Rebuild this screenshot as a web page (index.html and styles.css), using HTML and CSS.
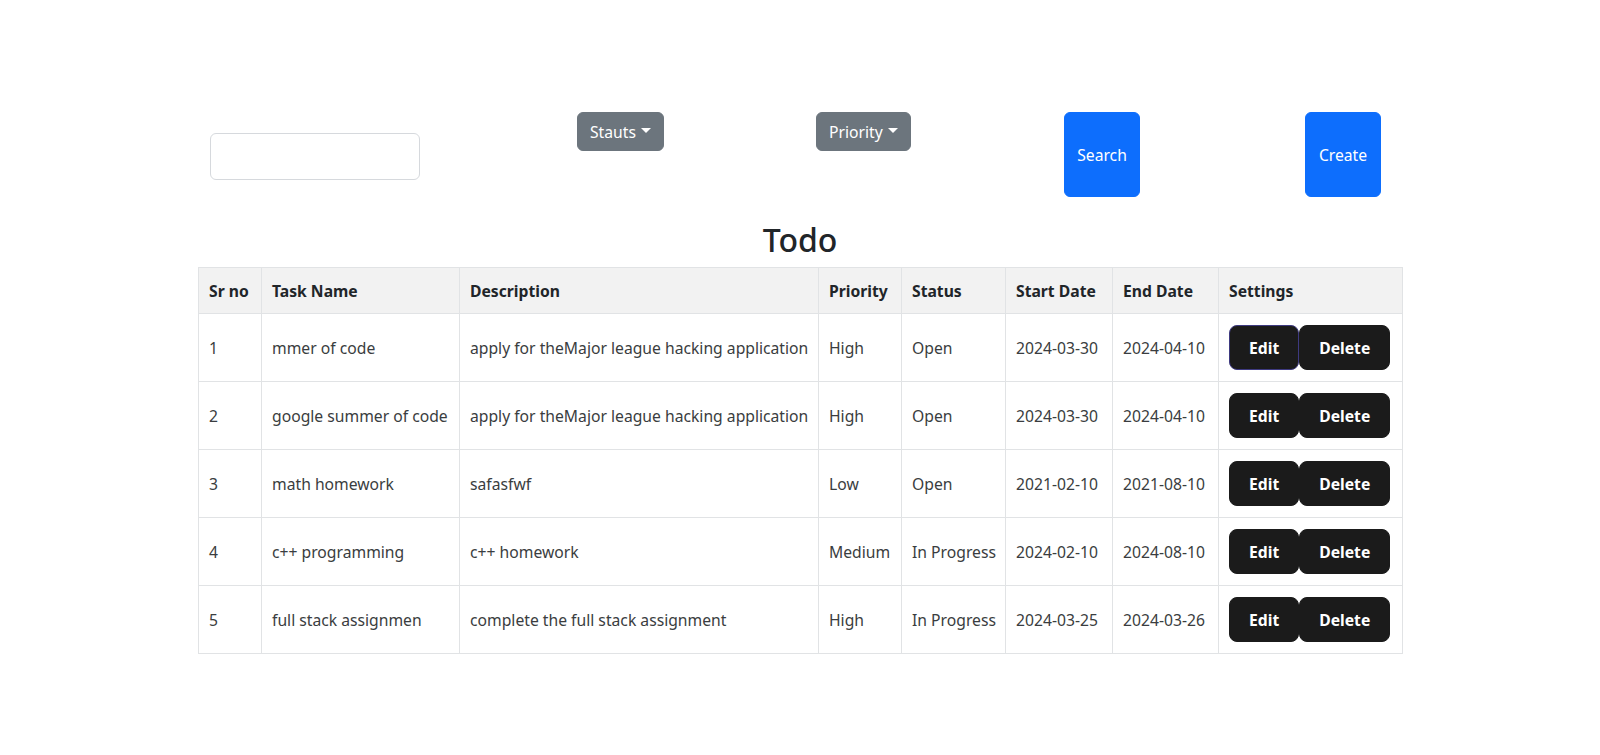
FILE: index.html
```html
<!DOCTYPE html>
<html lang="en">
<head>
<meta charset="utf-8">
<title>Todo</title>
<link rel="stylesheet" href="styles.css">
</head>
<body>
<main class="page">
  <div class="controls">
    <div class="ctl ctl-input"><input class="search-input" type="text"></div>
    <div class="ctl"><button class="btn btn-secondary">Stauts<span class="caret"></span></button></div>
    <div class="ctl"><button class="btn btn-secondary">Priority<span class="caret"></span></button></div>
    <div class="ctl"><button class="btn btn-primary btn-tall">Search</button></div>
    <div class="ctl"><button class="btn btn-primary btn-tall">Create</button></div>
  </div>

  <h2 class="title">Todo</h2>

  <table class="todo-table">
    <colgroup>
      <col class="c-sr"><col class="c-name"><col class="c-desc"><col class="c-pri">
      <col class="c-status"><col class="c-start"><col class="c-end"><col class="c-set">
    </colgroup>
    <thead>
      <tr>
        <th>Sr no</th><th>Task Name</th><th>Description</th><th>Priority</th>
        <th>Status</th><th>Start Date</th><th>End Date</th><th>Settings</th>
      </tr>
    </thead>
    <tbody>
      <tr>
        <td>1</td><td>mmer of code</td><td>apply for theMajor league hacking application</td><td>High</td>
        <td>Open</td><td>2024-03-30</td><td>2024-04-10</td>
        <td><div class="actions"><button class="btn btn-dark focused">Edit</button><button class="btn btn-dark">Delete</button></div></td>
      </tr>
      <tr>
        <td>2</td><td>google summer of code</td><td>apply for theMajor league hacking application</td><td>High</td>
        <td>Open</td><td>2024-03-30</td><td>2024-04-10</td>
        <td><div class="actions"><button class="btn btn-dark">Edit</button><button class="btn btn-dark">Delete</button></div></td>
      </tr>
      <tr>
        <td>3</td><td>math homework</td><td>safasfwf</td><td>Low</td>
        <td>Open</td><td>2021-02-10</td><td>2021-08-10</td>
        <td><div class="actions"><button class="btn btn-dark">Edit</button><button class="btn btn-dark">Delete</button></div></td>
      </tr>
      <tr>
        <td>4</td><td>c++ programming</td><td>c++ homework</td><td>Medium</td>
        <td>In Progress</td><td>2024-02-10</td><td>2024-08-10</td>
        <td><div class="actions"><button class="btn btn-dark">Edit</button><button class="btn btn-dark">Delete</button></div></td>
      </tr>
      <tr>
        <td>5</td><td>full stack assignmen</td><td>complete the full stack assignment</td><td>High</td>
        <td>In Progress</td><td>2024-03-25</td><td>2024-03-26</td>
        <td><div class="actions"><button class="btn btn-dark">Edit</button><button class="btn btn-dark">Delete</button></div></td>
      </tr>
    </tbody>
  </table>
</main>
</body>
</html>
```

FILE: styles.css
```css
* { box-sizing: border-box; }

html, body {
  margin: 0;
  background: #fff;
}

body {
  font-family: "Noto Sans", "Open Sans", sans-serif;
  font-size: 15.7px;
  line-height: 24px;
  color: #212529;
}

.page {
  width: 1204px;
  margin: 0 auto;
  padding-top: 112px;
}

.controls {
  display: grid;
  grid-template-columns: 12px 367px 239px 248px 241px 80px;
  align-items: start;
}

.ctl-input {
  grid-column: 2;
  align-self: center;
  padding-top: 4px;
}

.search-input {
  display: block;
  width: 210px;
  height: 47px;
  border: 1px solid #d6d9dd;
  border-radius: 6px;
  background: #fff;
  font: inherit;
  outline: none;
}

.btn {
  font-family: inherit;
  font-size: 15.7px;
  line-height: 24px;
  border: 1px solid transparent;
  border-radius: 6px;
  padding: 6px 12px;
  color: #fff;
  cursor: pointer;
}

.btn-secondary {
  background: #6c757d;
  border-color: #6c757d;
  display: inline-flex;
  align-items: center;
  height: 39px;
}

.caret {
  display: inline-block;
  margin-left: 5px;
  width: 0;
  height: 0;
  border-top: 5px solid #fff;
  border-left: 5px solid transparent;
  border-right: 5px solid transparent;
  position: relative;
  top: -1px;
}

.btn-primary {
  background: #0d6efd;
  border-color: #0d6efd;
}

.btn-tall {
  width: 76px;
  height: 85px;
  padding: 0;
}

.title {
  margin: 24px 0 8px;
  text-align: center;
  font-size: 32px;
  font-weight: 500;
  line-height: 38px;
  color: #212529;
}

.todo-table {
  width: 1204px;
  border-collapse: collapse;
  table-layout: fixed;
}

.c-sr { width: 63px; }
.c-name { width: 198px; }
.c-desc { width: 359px; }
.c-pri { width: 83px; }
.c-status { width: 104px; }
.c-start { width: 107px; }
.c-end { width: 106px; }
.c-set { width: 184px; }

.todo-table th,
.todo-table td {
  border: 1px solid #e1e3e5;
  padding: 11px 10px;
  text-align: left;
  vertical-align: middle;
  white-space: nowrap;
}

.todo-table th {
  background: #f2f2f2;
  font-weight: 700;
  color: #212529;
  padding: 11px 10px 10px;
}

.todo-table td {
  color: #3a3d40;
  height: 68px;
}

.actions {
  display: flex;
}

.btn-dark {
  background: #1b1b1b;
  border-color: #1b1b1b;
  border-radius: 8px;
  font-weight: 700;
  padding: 10px 19px;
  height: 45px;
}

.btn-dark.focused {
  border-color: #3e3a80;
}
```
